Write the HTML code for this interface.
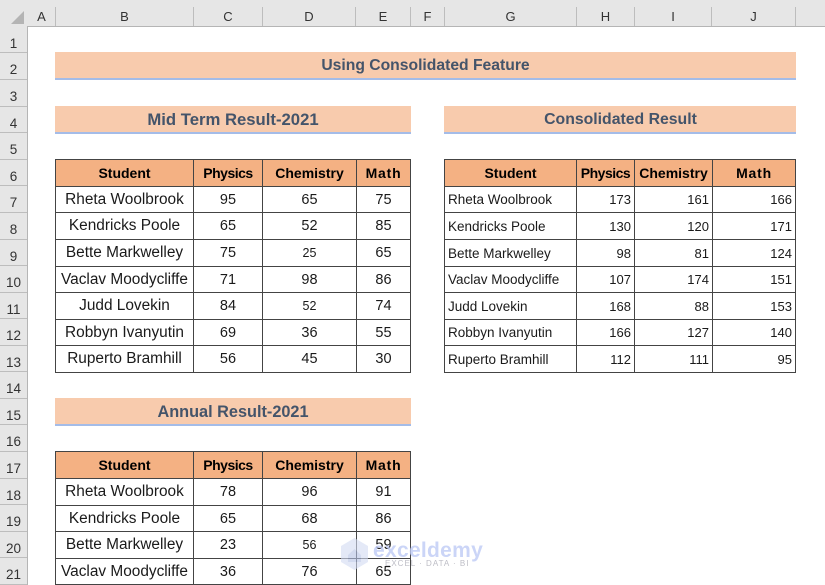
<!DOCTYPE html>
<html><head><meta charset="utf-8">
<style>
html,body{margin:0;padding:0;background:#fff}
#p{position:relative;width:825px;height:585px;overflow:hidden;background:#fff;font-family:"Liberation Sans",sans-serif;color:#1a1a1a}
.a{position:absolute}
.ch{position:absolute;top:7px;height:19px;line-height:19px;text-align:center;font-size:13px;color:#333;border-right:1px solid #bdbdbd;box-sizing:border-box}
.rh{position:absolute;left:0;width:27px;text-align:center;font-size:13.5px;color:#333;border-bottom:1px solid #bdbdbd;box-sizing:border-box;line-height:27px;padding-top:3px}
.t{position:absolute;background:#F8CBAD;border-bottom:2px solid #A4BCE8;box-sizing:border-box;text-align:center;font-weight:bold;color:#44546A;font-size:16px;height:28px;line-height:28px;white-space:nowrap}
table{position:absolute;border-collapse:collapse;table-layout:fixed;font-size:14.5px}
td,th{border:1px solid #444;padding:0;text-align:center;overflow:hidden;white-space:nowrap;font-weight:normal}
td:first-child{font-size:15.4px}
th{background:#F4B183;font-weight:bold;font-size:14px;color:#000}
th:nth-child(2){letter-spacing:-.5px}
th:nth-child(4){letter-spacing:.8px}
.r td{font-size:13px}
.r td:first-child{text-align:left;padding-left:3px;font-size:13.5px}
.r td+td{text-align:right;padding-right:3px}
</style></head><body><div id="p">

<div class="a" style="left:0;top:0;width:825px;height:26px;background:#E6E6E6;border-bottom:1px solid #b5b5b5;box-sizing:content-box"></div>
<div class="a" style="left:0;top:26px;width:27px;height:559px;background:#E6E6E6;border-right:1px solid #b5b5b5"></div>
<svg class="a" style="left:11px;top:11px" width="14" height="13"><polygon points="13,0 13,13 0,13" fill="#b4b4b4"/></svg>

<div class="ch" style="left:28px;width:28px">A</div>
<div class="ch" style="left:56px;width:138px">B</div>
<div class="ch" style="left:194px;width:69px">C</div>
<div class="ch" style="left:263px;width:93px">D</div>
<div class="ch" style="left:356px;width:55px">E</div>
<div class="ch" style="left:411px;width:34px">F</div>
<div class="ch" style="left:445px;width:132px">G</div>
<div class="ch" style="left:577px;width:58px">H</div>
<div class="ch" style="left:635px;width:77px">I</div>
<div class="ch" style="left:712px;width:84px">J</div>

<div class="rh" style="top:27px;height:26px">1</div>
<div class="rh" style="top:53px;height:27px">2</div>
<div class="rh" style="top:80px;height:27px">3</div>
<div class="rh" style="top:107px;height:26px">4</div>
<div class="rh" style="top:133px;height:27px">5</div>
<div class="rh" style="top:160px;height:26px">6</div>
<div class="rh" style="top:186px;height:27px">7</div>
<div class="rh" style="top:213px;height:27px">8</div>
<div class="rh" style="top:240px;height:26px">9</div>
<div class="rh" style="top:266px;height:27px">10</div>
<div class="rh" style="top:293px;height:26px">11</div>
<div class="rh" style="top:319px;height:27px">12</div>
<div class="rh" style="top:346px;height:26px">13</div>
<div class="rh" style="top:372px;height:27px">14</div>
<div class="rh" style="top:399px;height:26px">15</div>
<div class="rh" style="top:425px;height:27px">16</div>
<div class="rh" style="top:452px;height:27px">17</div>
<div class="rh" style="top:479px;height:26px">18</div>
<div class="rh" style="top:505px;height:27px">19</div>
<div class="rh" style="top:532px;height:26px">20</div>
<div class="rh" style="top:558px;height:27px">21</div>

<div class="t" style="left:55px;top:52px;width:741px;font-size:15.7px">Using Consolidated Feature</div>
<div class="t" style="left:55px;top:106px;width:356px;font-size:16.7px">Mid Term Result-2021</div>
<div class="t" style="left:444px;top:106px;width:352px;font-size:15.8px;padding-left:1px">Consolidated Result</div>
<div class="t" style="left:55px;top:398px;width:356px;font-size:16.3px">Annual Result-2021</div>

<table style="left:55px;top:159px;width:355px">
<colgroup><col style="width:138px"><col style="width:69px"><col style="width:94px"><col style="width:54px"></colgroup>
<tr style="height:27px"><th>Student</th><th>Physics</th><th>Chemistry</th><th>Math</th></tr>
<tr style="height:26px"><td>Rheta Woolbrook</td><td>95</td><td>65</td><td>75</td></tr>
<tr style="height:27px"><td>Kendricks Poole</td><td>65</td><td>52</td><td>85</td></tr>
<tr style="height:27px"><td>Bette Markwelley</td><td>75</td><td style="font-size:12.5px">25</td><td>65</td></tr>
<tr style="height:26px"><td>Vaclav Moodycliffe</td><td>71</td><td>98</td><td>86</td></tr>
<tr style="height:27px"><td>Judd Lovekin</td><td>84</td><td style="font-size:12.5px">52</td><td>74</td></tr>
<tr style="height:26px"><td>Robbyn Ivanyutin</td><td>69</td><td>36</td><td>55</td></tr>
<tr style="height:27px"><td>Ruperto Bramhill</td><td>56</td><td>45</td><td>30</td></tr>
</table>

<table class="r" style="left:444px;top:159px;width:351px">
<colgroup><col style="width:132px"><col style="width:58px"><col style="width:78px"><col style="width:83px"></colgroup>
<tr style="height:27px"><th>Student</th><th>Physics</th><th>Chemistry</th><th>Math</th></tr>
<tr style="height:26px"><td>Rheta Woolbrook</td><td>173</td><td>161</td><td>166</td></tr>
<tr style="height:27px"><td>Kendricks Poole</td><td>130</td><td>120</td><td>171</td></tr>
<tr style="height:27px"><td>Bette Markwelley</td><td>98</td><td>81</td><td>124</td></tr>
<tr style="height:26px"><td>Vaclav Moodycliffe</td><td>107</td><td>174</td><td>151</td></tr>
<tr style="height:27px"><td>Judd Lovekin</td><td>168</td><td>88</td><td>153</td></tr>
<tr style="height:26px"><td>Robbyn Ivanyutin</td><td>166</td><td>127</td><td>140</td></tr>
<tr style="height:27px"><td>Ruperto Bramhill</td><td>112</td><td>111</td><td>95</td></tr>
</table>

<table style="left:55px;top:451px;width:355px">
<colgroup><col style="width:138px"><col style="width:69px"><col style="width:94px"><col style="width:54px"></colgroup>
<tr style="height:27px"><th>Student</th><th>Physics</th><th>Chemistry</th><th>Math</th></tr>
<tr style="height:27px"><td>Rheta Woolbrook</td><td>78</td><td>96</td><td>91</td></tr>
<tr style="height:26px"><td>Kendricks Poole</td><td>65</td><td>68</td><td>86</td></tr>
<tr style="height:27px"><td>Bette Markwelley</td><td>23</td><td style="font-size:12.5px">56</td><td>59</td></tr>
<tr style="height:26px"><td>Vaclav Moodycliffe</td><td>36</td><td>76</td><td>65</td></tr>
</table>

<svg class="a" style="left:340px;top:537px;opacity:.6" width="30" height="34">
<polygon points="14.5,1 28,9 28,25 14.5,33 1,25 1,9" fill="#d3dcf3"/>
<polygon points="14.5,12 21,18 21,25 8,25 8,18" fill="#b5c2e6"/>
</svg>
<div class="a" style="left:373px;top:538px;font-size:21px;font-weight:bold;color:#bfcbf6;opacity:.8;line-height:26px;letter-spacing:.3px">exceldemy</div>
<div class="a" style="left:385px;top:558px;font-size:8px;color:#bdbdc6;letter-spacing:1px;line-height:11px;white-space:nowrap">EXCEL · DATA · BI</div>

</div></body></html>
